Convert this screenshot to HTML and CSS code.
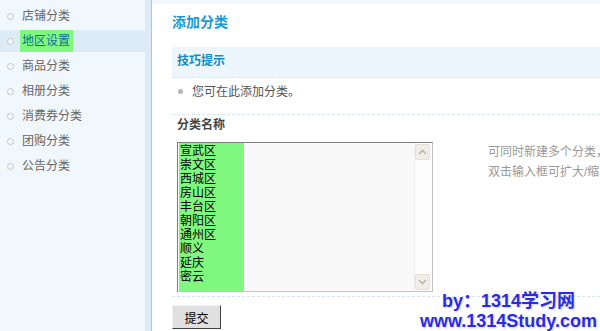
FILE: index.html
```html
<!DOCTYPE html>
<html lang="zh-CN">
<head>
  <meta charset="UTF-8" />
  <title>添加分类</title>
  <link rel="stylesheet" href="styles.css">
</head>
<body>

  <div class="page">
    <ul class="side-menu">
      <li class="menu-item">店铺分类</li>
      <li class="menu-item active"><span class="mark">地区设置</span></li>
      <li class="menu-item">商品分类</li>
      <li class="menu-item">相册分类</li>
      <li class="menu-item">消费券分类</li>
      <li class="menu-item">团购分类</li>
      <li class="menu-item">公告分类</li>
    </ul>
    <div class="divider"></div>

    <div class="main">
      <h2 class="title">添加分类</h2>

      <div class="tips">
        <h3>技巧提示</h3>
      </div>
      <ul class="tip-list">
        <li>您可在此添加分类。</li>
      </ul>

      <form class="cat-form">
        <div class="field-label">分类名称</div>
        <div class="field-row">
          <div class="fake-textarea">
            <div class="lines">
              <div>宣武区</div>
              <div>崇文区</div>
              <div>西城区</div>
              <div>房山区</div>
              <div>丰台区</div>
              <div>朝阳区</div>
              <div>通州区</div>
              <div>顺义</div>
              <div>延庆</div>
              <div>密云</div>
            </div>
            <div class="blank"></div>
            <div class="scrollbar">
              <span class="sb-btn">
                <svg width="9" height="6" viewBox="0 0 9 6"><path d="M1 5 L4.5 1.5 L8 5" fill="none" stroke="#b8b8b0" stroke-width="1.6"/></svg>
              </span>
              <span class="sb-btn">
                <svg width="9" height="6" viewBox="0 0 9 6"><path d="M1 1 L4.5 4.5 L8 1" fill="none" stroke="#b8b8b0" stroke-width="1.6"/></svg>
              </span>
            </div>
          </div>
          <div class="hint">
            可同时新建多个分类，<br>
            双击输入框可扩大/缩小
          </div>
        </div>
        <div class="form-foot">
          <button type="submit">提交</button>
        </div>
      </form>

      <div class="watermark">
        by：1314学习网<br>
        www.1314Study.com
      </div>
    </div>
  </div>

</body>
</html>
```

FILE: styles.css
```css
:root {
  --side-bg: #f1f8fd;
  --side-dark: #dcebf6;
  --line-blue: #a9c8dc;
  --title-blue: #1a9ad4;
  --dash: #d3e7f5;
}

body {
  margin: 0;
  width: 600px;
  height: 331px;
  overflow: hidden;
  font-family: "Liberation Sans", "Noto Sans CJK SC", sans-serif;
  font-size: 12px;
  color: #555;
  background: #fff;
}

.page {
  display: flex;
  height: 331px;
}

/* left menu */
.side-menu {
  list-style: none;
  margin: 0;
  padding: 5px 0 0;
  width: 145px;
  flex-shrink: 0;
  background: var(--side-bg);
}

.menu-item {
  height: 22px;
  line-height: 22px;
  margin-bottom: 3px;
  padding-left: 22px;
  position: relative;
  color: #666;
}

.menu-item::before {
  content: "";
  position: absolute;
  left: 7px;
  top: 8px;
  width: 5px;
  height: 5px;
  border: 1px solid #c4c4c4;
  border-radius: 50%;
  background: #f8f8f8;
}

.menu-item.active {
  background: var(--side-dark);
}

.menu-item .mark {
  display: inline-block;
  background: #80f880;
  color: #0b6f96;
  margin-left: -2px;
  padding: 0 3px 0 2px;
}

.divider {
  width: 6px;
  flex-shrink: 0;
  background: var(--side-dark);
  border-right: 1px solid var(--line-blue);
}

/* content */
.main {
  flex: 1;
  min-width: 0;
  position: relative;
  border-top: 4px solid #f2f8fd;
  padding-left: 20px;
}

.title {
  margin: 8px 0 15px;
  height: 20px;
  line-height: 20px;
  font-size: 14px;
  color: var(--title-blue);
}

.tips {
  background: #eef6fd;
  border-bottom: 1px dashed var(--dash);
  height: 30px;
}

.tips h3 {
  margin: 0;
  padding-left: 5px;
  line-height: 29px;
  font-size: 12px;
  color: #0f8dc6;
}

.tip-list {
  list-style: none;
  margin: 0;
  padding: 3px 0 0 6px;
  height: 33px;
  border-bottom: 1px dashed var(--dash);
}

.tip-list li {
  line-height: 22px;
  padding-left: 14px;
  position: relative;
}

.tip-list li::before {
  content: "";
  position: absolute;
  left: 0;
  top: 8px;
  width: 5px;
  height: 5px;
  border-radius: 50%;
  background: #b8b8b8;
}

.field-label {
  padding: 3px 0 0 5px;
  line-height: 14px;
  font-weight: bold;
  color: #444;
}

.field-row {
  display: flex;
  gap: 55px;
  margin-top: 10px;
  padding-left: 5px;
}

.fake-textarea {
  display: flex;
  flex-shrink: 0;
  width: 254px;
  height: 148px;
  border: 1px solid #808080;
  border-right-color: #c4c4c4;
  border-bottom-color: #c4c4c4;
  background: #f9f9f9;
}

.lines {
  width: 65px;
  margin-left: 1px;
  padding-top: 1px;
  background: #80f880;
  color: #000;
}

.lines div {
  height: 14px;
  line-height: 14px;
  padding-left: 1px;
}

.blank {
  flex: 1;
}

.scrollbar {
  width: 16px;
  display: flex;
  flex-direction: column;
  justify-content: space-between;
  padding: 1px 1px 1px 0;
  border-left: 1px solid #eee;
  background: #fdfdfd;
}

.sb-btn {
  display: flex;
  align-items: center;
  justify-content: center;
  width: 15px;
  height: 16px;
  background: #efeee8;
  border: 1px solid #e2e1da;
  border-radius: 2px;
  box-sizing: border-box;
}

.hint {
  line-height: 20px;
  white-space: nowrap;
  color: #999;
}

.form-foot {
  margin-top: 4px;
  border-top: 1px dashed var(--dash);
  padding-top: 8px;
}

button {
  width: 49px;
  height: 24px;
  padding: 0;
  background: #e0e0e0;
  border: 1px solid;
  border-color: #f2f2f2 #404040 #404040 #f2f2f2;
  font-family: "Noto Sans CJK SC", sans-serif;
  font-size: 12px;
  color: #000;
}

.watermark {
  position: absolute;
  right: 3px;
  bottom: 0;
  text-align: center;
  line-height: 20px;
  font-size: 18px;
  font-weight: bold;
  color: #2a2ae6;
  text-shadow: 0 0 2px #fff, 1px 1px 2px #c8c8f0;
}
```
